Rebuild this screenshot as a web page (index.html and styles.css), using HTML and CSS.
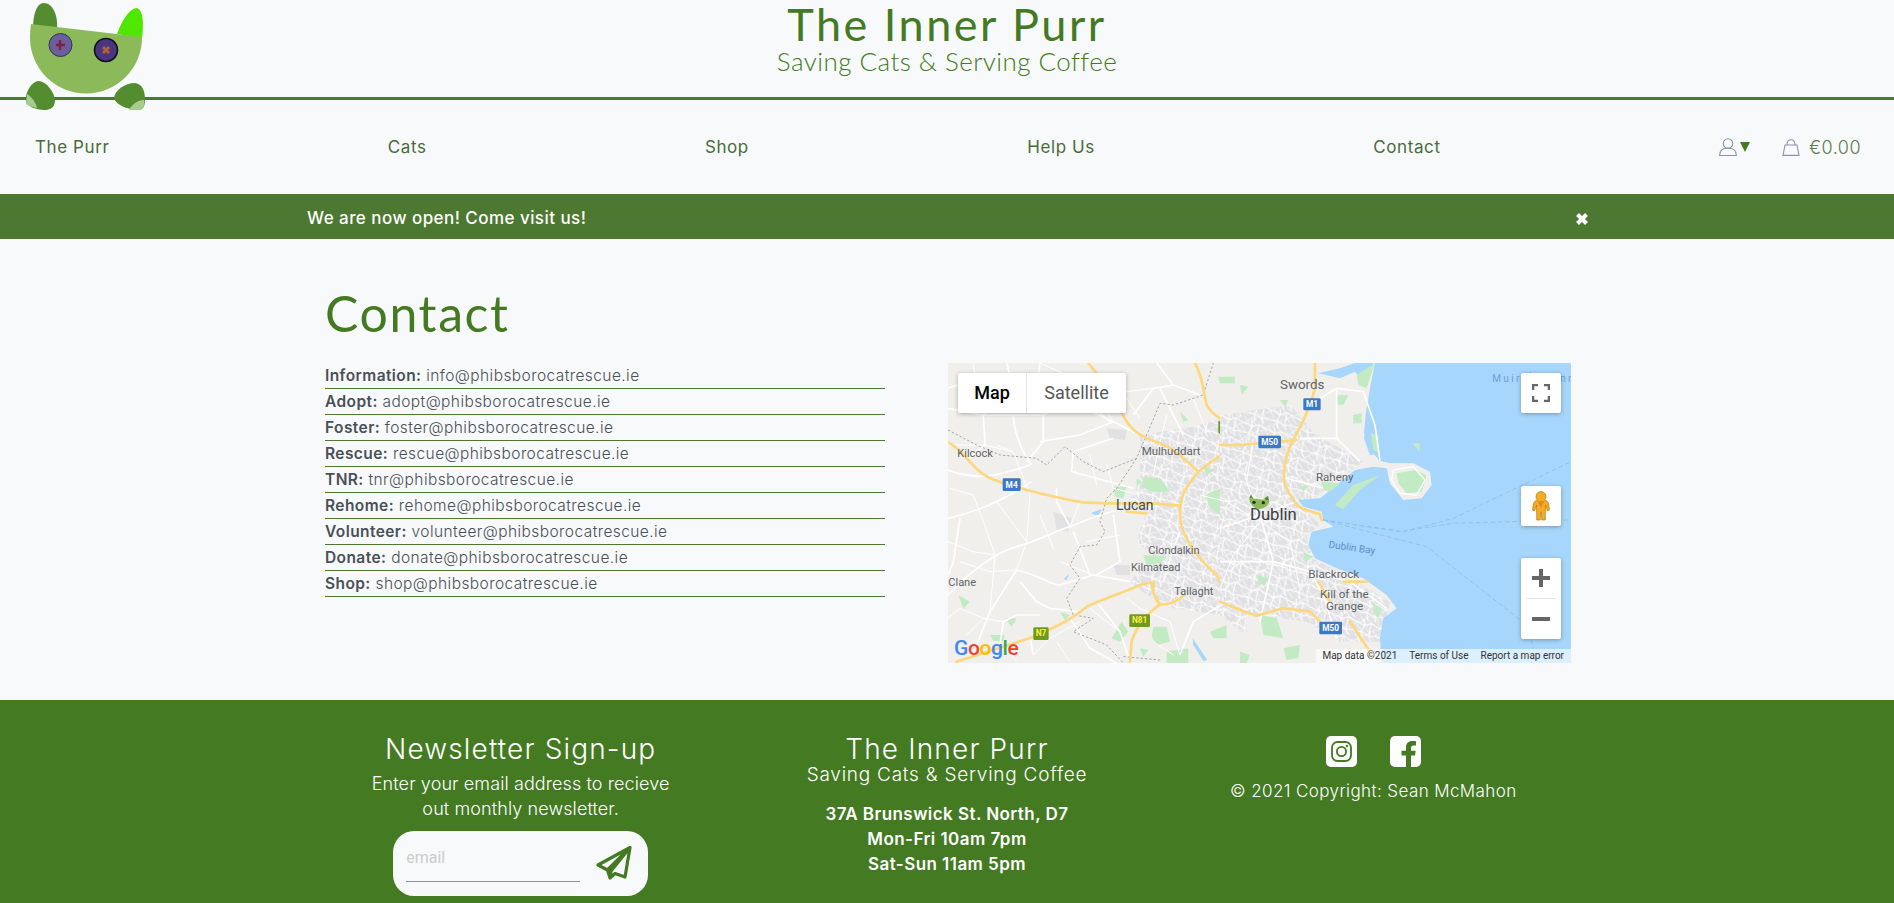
FILE: index.html
```html
<!DOCTYPE html>
<html lang="en">
<head>
<meta charset="utf-8">
<title>The Inner Purr - Contact</title>
<link rel="stylesheet" href="styles.css">
</head>
<body>
<header class="site-header">
  <svg class="logo" width="150" height="112" viewBox="0 0 150 112">
    <path class="logo-dark" d="M33,25 C34,10 38,3 44,3 C52,3 58,14 57,28 Z"/>
    <path class="logo-ear" d="M117,34 C122,20 130,8 137,8 C143,10 144,22 142,38 Z"/>
    <path class="logo-head" d="M31,24 L142,37 A56,56 0 1 1 30,38 Q30,30 31,24 Z"/>
    <circle class="eye-a" cx="60.500" cy="45" r="11.500"/>
    <path class="stitch" d="M60,40 L60,50 M56,45 L65,45"/>
    <circle class="eye-b" cx="106" cy="50" r="11.500"/>
    <path class="stitch-b" d="M103,47 L109,53 M109,47 L103,53"/>
    <path class="logo-dark" d="M26,96 C28,88 33,81 39,81 C47,82 54,92 55,100 C55,108 50,110 44,110 C36,110 28,106 26,103 Z"/>
    <path class="logo-pale" d="M27,94 C32,97 36,103 37,108 C31,107 27,105 26,103 Z"/>
    <path class="logo-dark" d="M114,98 C115,90 125,83 135,83 C143,84 145,92 145,100 C145,106 143,109 140,110 C130,110 116,106 114,98 Z"/>
    <path class="logo-pale" d="M129,110 C132,104 138,100 144,100 C145,106 143,109 140,110 Z"/>
  </svg>
  <div class="brand">
    <div class="brand-name">The Inner Purr</div>
    <div class="brand-sub">Saving Cats &amp; Serving Coffee</div>
  </div>
</header>

<nav class="site-nav">
  <a class="nav-link nav-purr">The Purr</a>
  <a class="nav-link nav-cats">Cats</a>
  <a class="nav-link nav-shop">Shop</a>
  <a class="nav-link nav-help">Help Us</a>
  <a class="nav-link nav-contact">Contact</a>
  <div class="nav-tools">
    <svg class="tool-icon" width="18" height="18" viewBox="0 0 18 18">
      <circle cx="9" cy="5.500" r="4.700"/>
      <path d="M0.600,17.500 C0.600,12.500 4,10 9,10 C14,10 17.400,12.500 17.400,17.500 Z"/>
    </svg>
    <span class="caret"></span>
    <svg class="tool-icon bag" width="18" height="17" viewBox="0 0 18 17">
      <path d="M3,6 L15,6 L17,16.400 L1,16.400 Z"/>
      <path d="M5,6 C5,2 6.500,0.800 9,0.800 C11.500,0.800 13,2 13,6"/>
    </svg>
    <span class="cart-total">€0.00</span>
  </div>
</nav>

<div class="banner">
  <div class="banner-inner">
    <span class="banner-text">We are now open! Come visit us!</span>
    <svg class="banner-close" width="14" height="14" viewBox="0 0 14 14"><path d="M2.500,2.500 L11.500,11.500 M11.500,2.500 L2.500,11.500"/></svg>
  </div>
</div>

<main class="contact">
  <h1 class="contact-title">Contact</h1>
  <div class="contact-row">
    <ul class="email-list">
      <li><b>Information:</b> info@phibsborocatrescue.ie</li>
      <li><b>Adopt:</b> adopt@phibsborocatrescue.ie</li>
      <li><b>Foster:</b> foster@phibsborocatrescue.ie</li>
      <li><b>Rescue:</b> rescue@phibsborocatrescue.ie</li>
      <li><b>TNR:</b> tnr@phibsborocatrescue.ie</li>
      <li><b>Rehome:</b> rehome@phibsborocatrescue.ie</li>
      <li><b>Volunteer:</b> volunteer@phibsborocatrescue.ie</li>
      <li><b>Donate:</b> donate@phibsborocatrescue.ie</li>
      <li><b>Shop:</b> shop@phibsborocatrescue.ie</li>
    </ul>
    <div class="map">
      <svg class="map-art" width="623" height="300" viewBox="0 0 623 300">
        <defs>
          <pattern id="streets" width="71" height="59" patternUnits="userSpaceOnUse" patternTransform="rotate(17)">
            <path class="street" d="M0,12 L27,18 L44,6 L71,14 M20,0 L27,18 L22,38 L30,59 M0,42 L22,38 L48,45 L71,38 M48,45 L44,6 M57,59 L48,45"/>
          </pattern>
          <pattern id="lanes" width="37" height="43" patternUnits="userSpaceOnUse" patternTransform="rotate(-24)">
            <path class="lane" d="M0,20 L37,14 M12,0 L18,43 M28,17 L33,43"/>
          </pattern>
        </defs>
        <rect class="land" width="623" height="300"/>
        <!-- west half, drawn in 3x units -->
        <g transform="translate(-8,-8) scale(0.3333)">
          <path class="city" d="M600,240 L760,215 L920,170 L920,840 L840,780 L700,760 L620,720 L570,680 L640,600 L590,560 L620,470 L560,450 L600,380 Z"/>
          <path class="city-lines" d="M600,240 L760,215 L920,170 L920,840 L840,780 L700,760 L620,720 L570,680 L640,600 L590,560 L620,470 L560,450 L600,380 Z"/>
          <path class="city-fine" d="M600,240 L760,215 L920,170 L920,840 L840,780 L700,760 L620,720 L570,680 L640,600 L590,560 L620,470 L560,450 L600,380 Z"/>
          <path class="city" d="M340,470 L395,490 L385,530 L350,525 Z M500,220 L560,225 L555,255 L510,250 Z M520,630 L570,630 L570,660 L530,660 Z"/>
          <path class="park" d="M610,365 L660,370 L690,410 L640,410 L605,395 Z M800,420 C830,395 900,400 920,420 L920,480 C870,495 800,480 800,420 Z M720,170 L745,195 L730,200 Z M835,65 L885,65 L885,85 L840,85 Z M610,600 L680,605 L660,625 L620,630 Z M640,815 L680,815 L690,860 L650,870 L635,845 Z M545,800 L565,830 L540,860 L515,850 Z M680,890 L745,880 L745,924 L680,924 Z M55,720 L90,740 L70,762 Z M195,790 L230,790 L215,815 Z M360,770 L390,780 L375,795 Z M810,830 L860,810 L860,850 L820,850 Z M790,335 L825,345 L800,360 Z M150,840 L195,840 L190,858 L160,858 Z M520,395 L560,395 L550,430 L525,425 Z M590,370 L605,380 L590,395 Z M600,880 L625,885 L610,905 Z"/>
          <path class="lake" d="M452,475 L485,462 L475,482 Z M758,850 L802,915 L790,918 L760,870 Z M372,672 L388,655 L380,675 Z"/>
          <path class="road-w" d="M24,345 C120,380 180,360 270,330 M24,490 C120,470 200,430 275,380 M60,490 L40,620 L25,660 M130,180 L135,270 L90,310 M220,180 C220,230 250,300 275,330 M310,180 L310,260 L260,320 M24,720 C90,650 170,590 230,575 C290,560 340,530 390,515 C450,490 500,470 540,465 M230,645 L150,770 L110,870 M240,680 L290,740 L330,760 L415,770 M230,645 C300,660 330,690 360,690 L460,660 L570,680 M450,660 L400,530 M390,515 L350,440 L350,400 M520,250 L400,290 L395,350 L580,400 M420,240 L520,200 L600,240 M510,200 L430,130 L440,70 M580,180 L640,100 L700,90 L780,120 M700,90 L650,24 M300,24 L290,90 L370,130 L520,200 M24,160 L130,180 L220,180 L310,180 L430,130 M200,24 L220,100 L130,180 M80,80 L24,100 M280,900 L270,845 M180,870 L190,800 L230,780 L300,780 M470,740 L540,830 L570,920 M520,480 L540,620 L470,660 M300,260 L420,240 M390,790 L450,880 L530,924 M670,680 L700,580 L720,530 M660,100 L730,240 M720,900 L760,800 L860,740"/>
          <path class="road-w-thin" d="M100,30 L130,180 M24,270 L130,270 L220,290 M60,620 L150,650 L230,645 M360,620 L460,660 M420,800 L330,850 L280,900 M130,500 L165,600 L150,770 M270,420 L260,560 L230,645 M420,440 L390,515 M500,330 L520,400 L600,420 M680,180 L660,260 L640,360 M760,130 L800,230 M520,60 L560,110 L640,100 M430,70 L520,60 M330,60 L290,90 M470,120 L520,200 M600,760 L690,800 L720,900 M24,560 L100,590 L165,600 M24,790 L60,760 L130,790 L190,800 M80,840 L130,790 M170,440 L215,500 L260,560 M440,560 L540,540 M300,480 L340,580 M420,130 L380,60 L300,24 M130,100 L200,100 M170,270 L220,290 L270,420 M450,300 L470,390 M560,130 L600,190 M30,400 L100,420 L130,500 M450,760 L500,800 L540,830 M640,860 L700,900 M560,730 L600,760 M350,860 L390,920 M200,880 L230,920"/>
          <path class="bound" d="M24,225 L110,270 L180,300 L290,310 L320,330 L375,275 L430,320 L490,350 L590,310 L620,240 L660,145 L700,150 L790,120 L820,24 M590,310 L530,400 L500,430 L480,500 L495,530 L470,570 L420,575 L390,630 L420,670 L380,730 L400,780 L460,790 L400,830 L500,870 L550,924 M550,905 L660,915"/>
          <path class="road-y" d="M24,262 C70,285 80,320 130,358 C170,385 220,390 260,405 C320,420 380,435 430,442 L500,445 L640,445 L720,452 M765,24 C790,70 790,110 800,150 C820,190 860,190 875,225 L895,278 M920,270 C860,285 810,320 775,350 C750,380 735,400 725,430 C715,480 720,510 735,540 C755,585 790,625 830,660 C855,700 850,740 880,750 L920,758 M445,24 L472,58 M548,178 C570,225 600,245 660,265 C710,285 740,320 775,350 M50,920 C110,900 180,880 280,845 C340,820 400,790 440,755 C480,735 530,720 590,695 C620,680 650,680 640,690 C635,710 650,740 660,748 C690,750 710,740 730,722 M640,680 C625,690 650,735 660,748 C630,770 590,810 575,860 L570,920 M560,470 L620,475"/>
          <rect class="shield-blue" x="188" y="370" width="54" height="38" rx="4"/>
          <text class="shield-text" x="215" y="398">M4</text>
          <rect class="shield-green" x="835" y="198" width="46" height="38" rx="4"/>
          <text class="shield-text-y" x="858" y="225">N2</text>
          <rect class="shield-green" x="568" y="778" width="62" height="38" rx="4"/>
          <text class="shield-text-y" x="599" y="805">N81</text>
          <rect class="shield-green" x="280" y="817" width="46" height="38" rx="4"/>
          <text class="shield-text-y" x="303" y="844">N7</text>
          <text class="lbl" x="52" y="305">Kilcock</text>
          <text class="lbl-mid" x="605" y="300">Mulhuddart</text>
          <text class="lbl-lg" x="528" y="465">Lucan</text>
          <text class="lbl" x="625" y="597">Clondalkin</text>
          <text class="lbl" x="573" y="648">Kilmatead</text>
          <text class="lbl" x="703" y="720">Tallaght</text>
          <text class="lbl" x="25" y="693">Clane</text>
        </g>
        <!-- east half, drawn in 3x units -->
        <g transform="translate(292,-8) scale(0.3333)">
          <path class="city" d="M-60,180 L150,150 L230,240 L370,320 L220,430 L170,440 L240,510 L200,540 L215,610 L300,650 L450,740 L420,860 L300,860 L200,800 L50,780 L-60,750 Z"/>
          <path class="city-lines" d="M-60,180 L150,150 L230,240 L370,320 L220,430 L170,440 L240,510 L200,540 L215,610 L300,650 L450,740 L420,860 L300,860 L200,800 L50,780 L-60,750 Z"/>
          <path class="city-fine" d="M-60,180 L150,150 L230,240 L370,320 L220,430 L170,440 L240,510 L200,540 L215,610 L300,650 L450,740 L420,860 L300,860 L200,800 L50,780 L-60,750 Z"/>
          <path class="water" d="M405,24 L392,90 L378,170 L372,235 L395,290 L420,318 L450,325 L520,325 L570,350 L575,390 L545,430 L490,435 L450,385 L440,340 L400,335 L345,345 L290,390 L240,430 L175,435 L190,455 L245,470 L250,495 L280,515 L215,530 L205,570 L225,610 L290,640 L370,670 L440,720 L470,760 L430,790 L420,850 L425,924 L993,924 L993,24 Z"/>
          <path class="water" d="M235,55 L300,40 L345,24 L400,24 L378,90 L345,50 L300,70 Z M375,235 L400,300 L390,300 L372,250 Z"/>
          <path class="park" d="M285,450 L340,390 L420,360 L360,405 L310,462 Z M470,355 L525,345 L560,360 L545,410 L500,415 L475,385 Z M350,60 L405,24 L380,100 L355,90 Z M392,235 L415,240 L418,295 L400,285 Z M518,265 L540,265 L538,290 Z M290,120 L325,120 L310,150 L290,150 Z M340,180 L365,175 L365,205 L340,205 Z M245,380 L300,385 L270,410 L250,405 Z M0,90 L25,95 L5,120 Z M120,135 L145,135 L135,155 Z M50,660 L85,670 L75,690 L55,685 Z M60,780 L110,790 L130,850 L70,840 Z M130,880 L180,870 L175,910 L140,915 Z M190,590 L220,605 L195,620 Z M0,890 L30,900 L20,924 L0,924 Z M400,745 L425,760 L415,790 L400,775 Z M180,395 L210,390 L190,410 Z"/>
          <path class="park-road" d="M460,345 L520,335 L555,375 L530,420 L480,415 L455,375 Z"/>
          <path class="road-w" d="M225,140 L290,100 L370,110 L405,210 L420,318 M290,100 L290,250 L360,320 M180,250 L290,250 M140,370 L250,400 M-60,520 L60,480 L170,440 M60,480 L100,620 L210,650 L330,680 L440,760 M100,620 L60,800 M-60,620 L100,620 M210,650 L250,720 L290,850"/>
          <path class="road-w-thin" d="M60,500 L-40,440 L-120,420 M60,500 L20,380 L40,250 M60,500 L-20,600 L-60,700 M60,500 L150,560 L180,700"/>
          <path class="ship" d="M250,495 L490,530 L640,490 L993,320 M250,495 L480,530 L640,505 L993,495 M250,495 L560,575 L860,810 L880,880"/>
          <path class="road-y" d="M225,24 L225,100 C210,160 190,200 165,245 C140,290 125,340 135,390 C155,430 170,455 190,462 L240,478 L245,495 M-60,270 L0,270 L170,255 M-60,740 L0,765 L50,782 L130,760 L210,770 L270,830 M235,680 L270,740 M330,800 L390,890 M310,680 L380,680"/>
          <rect class="shield-blue" x="190" y="130" width="52" height="36" rx="4"/>
          <text class="shield-text" x="216" y="157">M1</text>
          <rect class="shield-blue" x="55" y="242" width="68" height="38" rx="4"/>
          <text class="shield-text" x="89" y="270">M50</text>
          <rect class="shield-blue" x="238" y="800" width="68" height="38" rx="4"/>
          <text class="shield-text" x="272" y="828">M50</text>
          <text class="lbl-big" x="120" y="103">Swords</text>
          <text class="lbl-mid" x="228" y="378">Raheny</text>
          <text class="lbl-xl" x="30" y="495">Dublin</text>
          <text class="lbl-md" x="205" y="668">Blackrock</text>
          <text class="lbl-md" x="240" y="728">Kill of the</text>
          <text class="lbl-md" x="258" y="765">Grange</text>
          <text class="lbl-sea" x="265" y="578" transform="rotate(8 265 578)">Dublin Bay</text>
          <text class="lbl-muir" x="757" y="81">Muir Éireann</text>
          <path class="logo-dark" d="M28,430 L33,418 L40,432 Z M72,432 L84,422 L88,440 Z"/>
          <path class="logo-head" d="M28,430 L88,436 C88,452 72,462 58,462 C42,462 28,448 28,430 Z"/>
          <circle class="marker-eye" cx="42" cy="442" r="5"/>
          <circle class="marker-eye" cx="70" cy="443" r="5"/>
        </g>
      </svg>
      <div class="map-type">
        <span class="map-type-on">Map</span>
        <span class="map-type-off">Satellite</span>
      </div>
      <div class="map-btn map-full">
        <svg width="18" height="18" viewBox="0 0 18 18"><path d="M1,6 L1,1 L6,1 M12,1 L17,1 L17,6 M17,12 L17,17 L12,17 M6,17 L1,17 L1,12"/></svg>
      </div>
      <div class="map-btn map-peg">
        <svg width="18" height="30" viewBox="0 0 18 30">
          <path class="peg" d="M9,0.600 C12,0.600 14,3 14,5.500 C14,7 13.300,8.200 12.500,9 C15,9.500 16,11 16.600,13 L17.500,19 L15.500,20 L13.500,14 L13.200,29 L9.800,29 L9.400,21 L8.600,21 L8.200,29 L4.800,29 L4.500,14 L2.500,20 L0.500,19 L1.400,13 C2,11 3,9.500 5.500,9 C4.700,8.200 4,7 4,5.500 C4,3 6,0.600 9,0.600 Z"/>
          <path class="peg-tie" d="M5.500,10 L12.500,10 L9,17 Z"/>
        </svg>
      </div>
      <div class="map-zoom">
        <svg class="zoom-glyph" width="18" height="18" viewBox="0 0 18 18"><path d="M0,9 L18,9 M9,0 L9,18"/></svg>
        <span class="zoom-rule"></span>
        <svg class="zoom-glyph" width="18" height="18" viewBox="0 0 18 18"><path d="M0,9 L18,9"/></svg>
      </div>
      <div class="google"><span class="g-b">G</span><span class="g-r">o</span><span class="g-y">o</span><span class="g-b">g</span><span class="g-g">l</span><span class="g-r">e</span></div>
      <div class="attribution"><span>Map data ©2021</span><span>Terms of Use</span><span>Report a map error</span></div>
    </div>
  </div>
</main>

<footer class="site-footer">
  <div class="footer-grid">
    <section class="footer-col">
      <h2 class="footer-head">Newsletter Sign-up</h2>
      <p class="footer-copy">Enter your email address to recieve<br>out monthly newsletter.</p>
      <form class="signup">
        <input class="signup-input" type="text" placeholder="email">
        <svg class="signup-send" width="36" height="34" viewBox="0 0 36 34">
          <path d="M34,1.500 L2,19 L11.500,24 L14,32 L19,27.500 L29,31 Z M34,1.500 L11.500,24 M34,1.500 L15,25 L14,32"/>
        </svg>
      </form>
    </section>
    <section class="footer-col">
      <h2 class="footer-head footer-name">The Inner Purr</h2>
      <p class="footer-strap">Saving Cats &amp; Serving Coffee</p>
      <p class="footer-hours">37A Brunswick St. North, D7<br>Mon-Fri 10am 7pm<br>Sat-Sun 11am 5pm</p>
    </section>
    <section class="footer-col">
      <div class="socials">
        <svg width="31" height="31" viewBox="0 0 31 31">
          <rect class="social-bg" width="31" height="31" rx="5"/>
          <rect class="social-line" x="6" y="6" width="19" height="19" rx="5.500"/>
          <circle class="social-line" cx="15.500" cy="15.500" r="4.600"/>
          <circle class="social-dot" cx="21" cy="10" r="1.200"/>
        </svg>
        <svg width="31" height="31" viewBox="0 0 31 31">
          <rect class="social-bg" width="31" height="31" rx="5"/>
          <path class="social-f" d="M21,31 L21,19.500 L25,19.500 L25.700,14.800 L21,14.800 L21,12 C21,10.500 21.800,9.500 23.500,9.500 L26,9.500 L26,5.300 C24.800,5.100 23.500,5 22.300,5 C18.400,5 16,7.300 16,11.500 L16,14.800 L11.500,14.800 L11.500,19.500 L16,19.500 L16,31 Z"/>
        </svg>
      </div>
      <p class="copyright">© 2021 Copyright: Sean McMahon</p>
    </section>
  </div>
</footer>
</body>
</html>
```

FILE: styles.css
```css
* { box-sizing: border-box; }
html, body { margin: 0; padding: 0; }
body {
  background: #f8f9fa;
  color: #495057;
  font-family: Inter, "Open Sans", sans-serif;
  overflow: hidden;
  height: 903px;
}

/* header */
.site-header {
  position: relative;
  height: 100px;
  border-bottom: 3px solid #4d7831;
  display: flex;
  justify-content: center;
}
.logo { position: absolute; left: 0; top: 0; z-index: 2; }
.logo-dark { fill: #548d2f; }
.logo-ear { fill: #4fe600; }
.logo-head { fill: #8cba5a; }
.logo-pale { fill: #a7cd8e; }
.eye-a { fill: #6c5d9c; stroke: #2b3a4a; stroke-width: 1; }
.eye-b { fill: #49367f; stroke: #0c0c18; stroke-width: 1.500; }
.stitch { stroke: #7a2340; stroke-width: 2.500; fill: none; }
.stitch-b { stroke: #b0603c; stroke-width: 3; fill: none; }
.brand { padding-top: 1px; text-align: center; color: #437a22; font-family: Lato, sans-serif; }
.brand-name { font-size: 45px; line-height: 46px; letter-spacing: 2.500px; font-weight: 400; }
.brand-sub { font-size: 26px; line-height: 28px; letter-spacing: 0.450px; font-weight: 300; }

/* nav */
.site-nav {
  height: 94px;
  padding: 0 34px 0 35px;
  display: flex;
  align-items: center;
  justify-content: space-between;
}
.nav-link { color: #4a6b3a; font-size: 17px; letter-spacing: 0.600px; white-space: nowrap; }
.nav-tools { display: flex; align-items: center; }
.tool-icon { fill: none; stroke: #8a94a6; stroke-width: 1.100; }
.caret {
  width: 0; height: 0;
  margin: 0 32px 0 3px;
  border-left: 5px solid transparent;
  border-right: 5px solid transparent;
  border-top: 10px solid #437a22;
}
.cart-total { margin-left: 9px; width: 51px; color: #5e7a50; font-size: 18px; font-weight: 300; letter-spacing: 0.500px; white-space: nowrap; }

/* banner */
.banner { height: 45px; background: #4d7831; }
.banner-inner {
  width: 1280px;
  height: 100%;
  margin: 0 auto;
  display: flex;
  align-items: center;
  justify-content: space-between;
}
.banner-text { margin-top: 2px; color: #fff; font-size: 17px; font-weight: 500; letter-spacing: 0.450px; }
.banner-close { margin: 4px -2px 0 0; stroke: #fff; stroke-width: 4; fill: none; }

/* contact */
.contact { height: 461px; padding: 45px 323px 0 325px; }
.contact-title {
  margin: 0 0 20px;
  height: 59px;
  color: #437a22;
  font-family: Lato, sans-serif;
  font-size: 50px;
  line-height: 59px;
  font-weight: 400;
  letter-spacing: 1.600px;
}
.contact-row { display: flex; justify-content: space-between; align-items: flex-start; }
.email-list { list-style: none; margin: 0; padding: 0; width: 560px; }
.email-list li {
  height: 26px;
  border-bottom: 1px solid #4d7831;
  font-size: 15.500px;
  line-height: 25px;
  letter-spacing: 0.420px;
  font-weight: 300;
  color: #495057;
  white-space: nowrap;
}
.email-list b { font-weight: 600; }

/* map */
.map { position: relative; width: 623px; height: 300px; overflow: hidden; font-family: Roboto, sans-serif; flex: none; }
.map-art { display: block; }
.land { fill: #f0efec; }
.city { fill: #e1e1e3; }
.city-lines { fill: url(#streets); }
.city-fine { fill: url(#lanes); }
.street { fill: none; stroke: #fff; stroke-width: 3; }
.lane { fill: none; stroke: #fff; stroke-width: 1.800; }
.water { fill: #a6d6fb; }
.park { fill: #c2ebc4; }
.park-road { fill: none; stroke: #fff; stroke-width: 4; }
.lake { fill: #a6d6fb; }
.road-w { fill: none; stroke: #fff; stroke-width: 5; stroke-linejoin: round; }
.road-w-thin { fill: none; stroke: #fff; stroke-width: 3; stroke-linejoin: round; }
.road-y { fill: none; stroke: #fdd77c; stroke-width: 8; stroke-linejoin: round; stroke-linecap: round; }
.bound { fill: none; stroke: #a5a5a5; stroke-width: 3; stroke-dasharray: 7 6; }
.ship { fill: none; stroke: #8fc3ec; stroke-width: 3; stroke-dasharray: 14 8; }
.shield-blue { fill: #3b78c8; }
.shield-green { fill: #6f9a1e; }
.shield-text { fill: #fff; font-size: 25px; font-weight: 700; text-anchor: middle; }
.shield-text-y { fill: #f7ee4a; font-size: 25px; font-weight: 700; text-anchor: middle; }
.lbl { fill: #5f6368; font-size: 33px; }
.lbl-mid { fill: #5f6368; font-size: 34.500px; }
.lbl-md { fill: #5f6368; font-size: 35px; }
.lbl-big { fill: #5f6368; font-size: 40px; }
.lbl-lg { fill: #46494d; font-size: 42px; }
.lbl-xl { fill: #3c4043; font-size: 50px; font-weight: 400; }
.lbl-sea { fill: #5c8fcb; font-size: 30px; }
.lbl-muir { fill: #6f9fd8; font-size: 30px; letter-spacing: 7px; }
.marker-eye { fill: #2c2c1c; }
.map-type {
  position: absolute; left: 10px; top: 10px;
  height: 40px; width: 168px;
  display: flex;
  background: #fff;
  border-radius: 2px;
  box-shadow: 0 1px 4px rgba(0,0,0,.3);
  font-size: 18px;
  line-height: 40px;
}
.map-type-on { width: 69px; text-align: center; color: #000; font-weight: 500; border-right: 1px solid #e6e6e6; }
.map-type-off { flex: 1; text-align: center; color: #565656; }
.map-btn, .map-zoom {
  position: absolute; right: 10px;
  width: 40px;
  background: #fff;
  border-radius: 2px;
  box-shadow: 0 1px 4px rgba(0,0,0,.3);
  display: flex;
  align-items: center;
  justify-content: center;
}
.map-btn { height: 40px; }
.map-full { top: 10px; }
.map-full path { fill: none; stroke: #666; stroke-width: 2.500; }
.map-peg { top: 123px; }
.peg { fill: #f4ac25; stroke: #b07a12; stroke-width: 0.700; }
.peg-tie { fill: #e58a1c; }
.map-zoom { top: 195px; height: 81px; flex-direction: column; justify-content: space-between; padding: 11px 0; }
.zoom-glyph path { fill: none; stroke: #666; stroke-width: 4; }
.zoom-rule { width: 30px; height: 1px; background: #e6e6e6; }
.google {
  position: absolute; left: 6px; bottom: 2px;
  font-family: Roboto, sans-serif;
  font-size: 21px;
  font-weight: 500;
  line-height: 26px;
  letter-spacing: -0.400px;
}
.g-b { color: #4285f4; }
.g-r { color: #ea4335; }
.g-y { color: #fbbc05; }
.g-g { color: #34a853; }
.attribution {
  position: absolute; right: 0; bottom: 0;
  height: 14px;
  padding: 0 7px 0 6px;
  display: flex;
  gap: 12px;
  background: rgba(255,255,255,.6);
  font-size: 10px;
  line-height: 14px;
  color: #333;
  white-space: nowrap;
}

/* footer */
.site-footer { height: 203px; background: #437a22; color: #fff; overflow: hidden; }
.footer-grid {
  width: 1279px;
  margin: 0 auto;
  display: grid;
  grid-template-columns: repeat(3, 1fr);
  text-align: center;
}
.footer-col { padding-top: 32px; }
.footer-head { margin: 0; font-size: 28px; line-height: 34px; font-weight: 300; letter-spacing: 1.150px; }
.footer-copy { margin: 5px 0 0; font-size: 18px; line-height: 25px; font-weight: 300; letter-spacing: 0.100px; }
.signup {
  margin: 10px auto 0;
  width: 255px; height: 65px;
  padding: 0 16px 0 13px;
  background: #f8f9fa;
  border-radius: 21px;
  display: flex;
  align-items: flex-start;
  justify-content: space-between;
}
.signup-input {
  width: 174px; height: 38px;
  margin-top: 13px;
  padding: 0 0 10px;
  border: 0;
  border-bottom: 1px solid #8d9299;
  background: none;
  font-family: Roboto, sans-serif;
  font-size: 16px;
  outline: none;
}
.signup-input::placeholder { color: #ccc; opacity: 1; }
.signup-send { fill: none; stroke: #437a22; stroke-width: 3.200; stroke-linejoin: round; margin-top: 15px; }
.footer-name { line-height: 34px; }
.footer-strap { margin: -3px 0 0; font-size: 19px; line-height: 24px; font-weight: 300; letter-spacing: 0.750px; }
.footer-hours { margin: 15px 0 0; font-size: 17px; line-height: 25px; font-weight: 600; letter-spacing: 0.450px; }
.socials { display: flex; justify-content: center; gap: 33px; margin-top: 4px; height: 31px; }
.social-bg { fill: #fff; }
.social-line { fill: none; stroke: #437a22; stroke-width: 1.800; }
.social-dot { fill: #437a22; }
.social-f { fill: #437a22; }
.copyright { margin: 12px 0 0; font-size: 17px; line-height: 24px; font-weight: 300; letter-spacing: 0.400px; }
```
